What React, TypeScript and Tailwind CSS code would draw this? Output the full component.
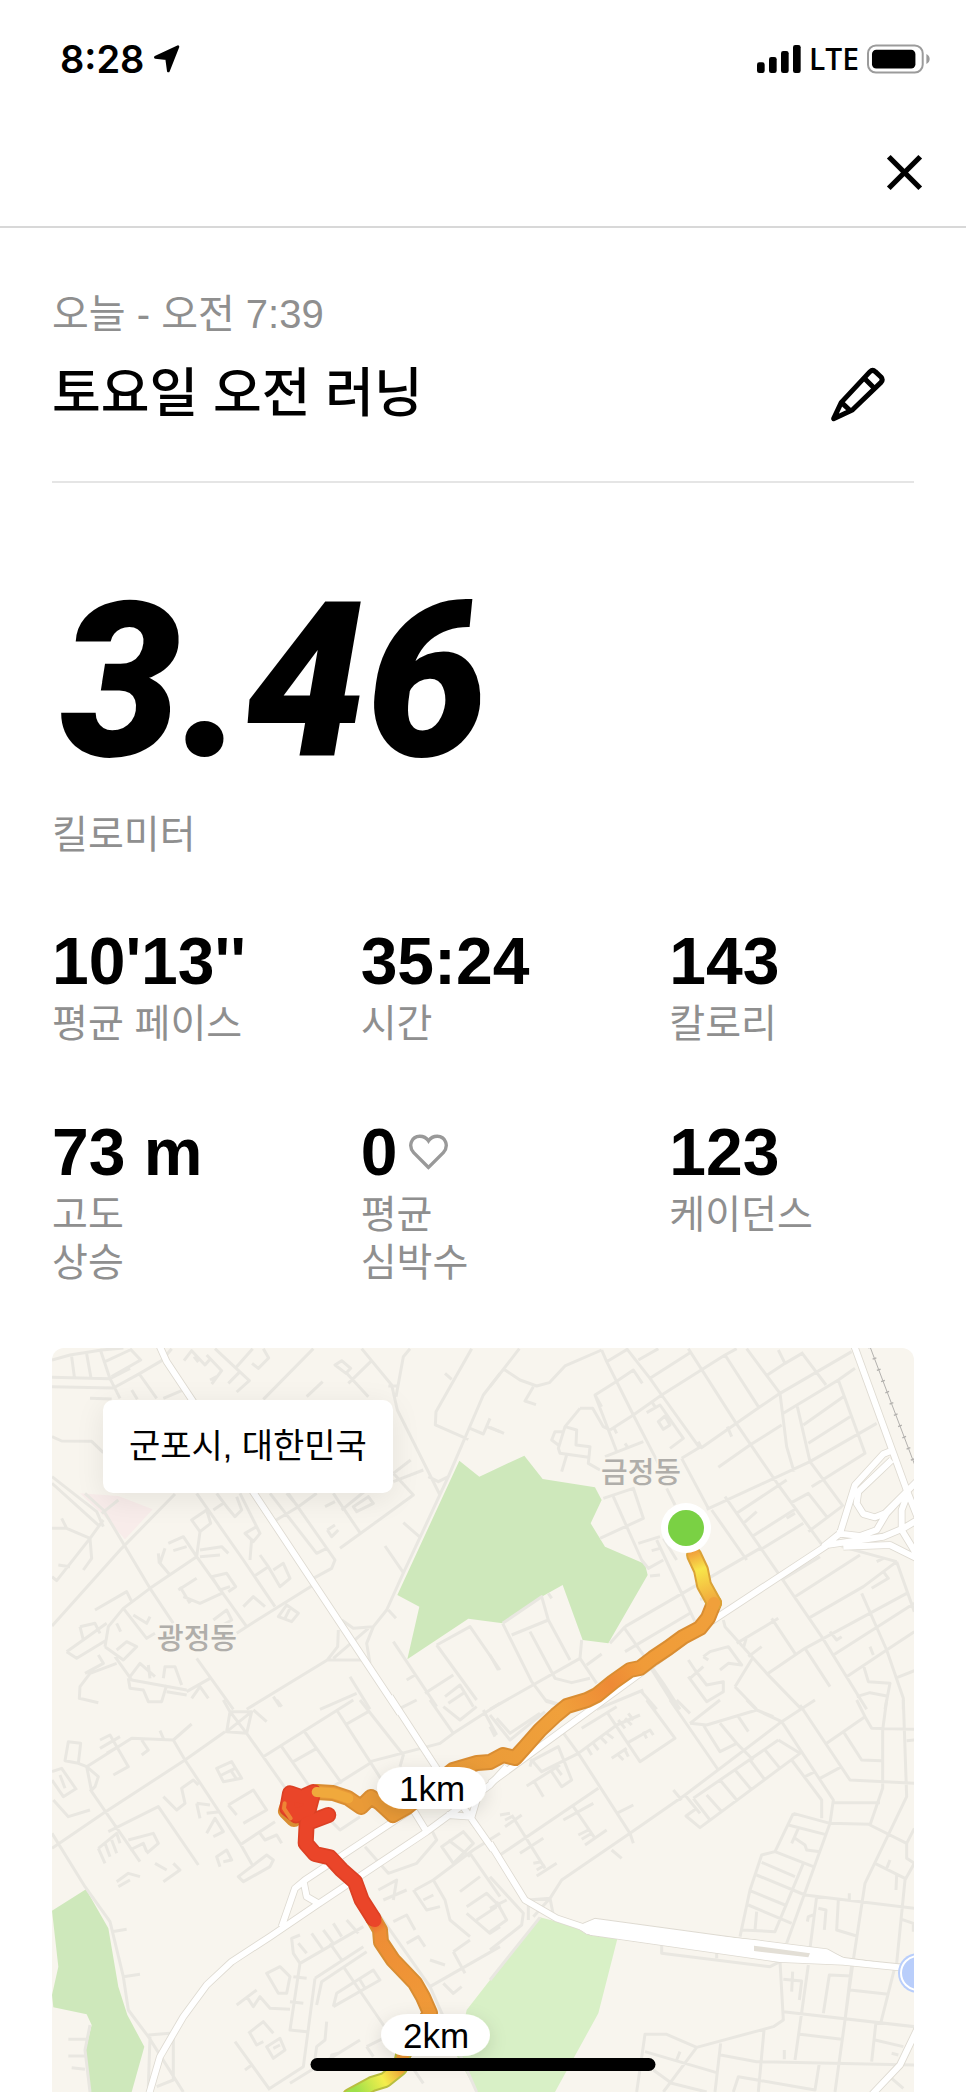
import { X } from 'lucide-react';

const textFont = "font-['Liberation_Sans','Noto_Sans_CJK_KR',sans-serif]";

const stats = [
  { value: "10'13''", label: '평균 페이스' },
  { value: '35:24', label: '시간' },
  { value: '143', label: '칼로리' },
  { value: '73 m', label: '고도\n상승' },
  { value: '0', label: '평균\n심박수', heart: true },
  { value: '123', label: '케이던스' },
];

// The map is drawn in four tiles, each at three units per pixel
const tiles = [
  {
    origin: 'translate(40 1330) scale(0.33333)',
    streets:
      'M36 90L90 75L185 60L250 54M36 142L210 146L270 115M36 170L220 174L300 130L365 92M95 80L103 140M140 72L153 144M180 56L210 146L240 205M195 95L270 60M270 56L302 90L215 140M298 132L350 205M275 180L292 208M365 92L395 56M150 205L215 207M370 205L425 182M36 320L65 333L155 334L190 368' +
      'M432 92L455 62L495 105L508 90M462 80L475 96M500 75L545 122L515 162M510 150L530 140M525 56L628 152L590 186M590 110L638 56M565 160L600 125M636 100L655 115L686 84L670 56M820 56L670 208M965 56L1055 165L1072 240L1200 495M995 92L925 160M885 105L905 92L932 115L918 130ZM920 130L985 200M800 200L848 155M1110 56L1090 80L1068 200M1045 168L1072 168' +
      'M1295 56L1188 245L1186 285L1285 328M1215 130L1235 148M1380 130L1330 195L1225 440L1195 455L1165 440M1290 295L1330 312L1350 265M1340 290L1380 305M1225 440L1085 740L1040 840L1000 890L940 895L905 870M1090 578L1138 620M1035 648L1090 728M1045 840L1068 865M1000 890L980 940L990 1000M895 900L893 950L862 990L985 990M862 990L620 1138M985 895L880 985' +
      'M36 440L170 545L190 590M36 460L180 590M135 490L190 540L330 775L400 880M235 510L185 550M190 570L150 625L155 685L130 720M36 595L80 595L150 625M65 565L80 595M150 625L50 752L36 740M55 705L90 710M36 888L245 655L405 492M330 775L470 680L480 605L455 570L500 540L512 580L480 605M390 735L360 700L375 655M358 700L355 670M385 640L430 620L470 680M400 662L440 650M480 660L545 650L565 670M480 680L540 675' +
      'M470 490L610 690L705 830M530 490L560 530L585 560L605 540L590 500M520 540L550 520M600 490L660 610L640 635L615 610L650 590M470 680L620 890L820 765M165 840L260 785L275 815M330 775L250 835L205 890L195 950M250 835L320 925L345 910M280 855L320 880L330 860M415 780L470 745M420 770L450 820M430 800L480 820L545 790M515 740L560 730L587 770L565 785M515 740L540 780L570 770M630 690L635 625M640 740L685 710L660 675M685 710L720 770L750 745L730 700L700 720M610 830L640 800L675 830M520 870L560 840L575 870L540 890M715 860L740 825L775 850L755 875ZM735 865L750 835M590 910L620 890' +
      'M705 572L775 530L830 490M690 490L830 670L860 655M745 490L885 690L875 715L820 745M775 530L740 490M880 490L960 608M900 655L1120 495L1060 430M905 540L1010 455M940 530L985 500L1000 520L950 545ZM855 530L885 515M1060 455L1150 420M1060 430L1112 390M862 600L885 585M862 600L875 620L895 600' +
      'M80 965L110 985L200 930M80 965L200 880M120 890L165 880L180 910M120 890L130 930M195 950L250 990L290 950L260 935L230 960M230 880L242 905M135 1030L190 1000L175 975M230 1000L150 1030L120 1070L118 1105L175 1118M225 980L275 1050L440 1080M265 1045L270 1075L310 1080L325 1115L365 1115L380 1065M270 1040L300 1000L345 1040M330 1045L325 1005M370 1045L375 1010L405 1010L425 1065M440 1095L380 1085M440 1085L510 1045M470 985L580 1138M455 1105L480 1070L505 1105M700 1100L720 1130M930 1040L990 1138M950 1090L840 1138M1060 935L1190 1130M1190 945L1290 890L1380 1020M1190 945L1310 1110M1100 1050L1125 1035M1240 1035L1155 1090M1215 1100L1260 1065L1300 1130M1225 1120L1270 1090',
    roads: 'M355 40L380 95L1080 1150',
  },
  {
    origin: 'translate(490 1330) scale(0.33333)',
    streets:
      'M0 170L88 56M42 118L90 150L140 168L178 158L225 108L335 60M130 170L105 213L138 224M0 292L42 310M335 60L350 95L430 255L505 400M350 95L415 56M378 155L430 120L457 160M378 155L315 195L382 370M315 195L335 230M360 300L430 255L515 195L705 75L740 56M410 56L480 145L515 195L630 355M445 90L505 56M480 145L600 68M595 56L735 275L865 465L1000 650M705 75L805 230M770 56L870 190L890 350L912 425M865 60L885 100L940 68M935 68L1008 165M885 100L832 135M632 355L808 232L870 190L1085 65M575 385L632 350M685 412L780 345L875 285M880 250L1045 150L1095 115M1045 150L1125 370L965 470' +
      'M922 230L960 395L1060 530M940 285L1060 200M955 340L1080 260M960 395L1160 280M960 395L650 538M740 550L890 450M760 580L800 545M785 620L920 535M810 660L940 580M900 520L955 490L1010 560M955 605L1055 530M575 385L655 535M665 540L770 690M705 500L865 730L995 920L1130 1138M890 565L915 550' +
      'M270 235L225 290L260 300L258 345L300 350L295 400L330 420M270 235L308 235L340 290L360 300M225 290L205 355L210 370L295 382M230 375L215 425M220 305L195 305L185 330L205 345M345 380L460 335M405 340L415 355M370 290L380 310M470 248L510 225L580 325L540 355M505 275L525 258L540 285L520 298ZM485 215L495 230M625 335L635 355M712 290L725 320' +
      'M340 505L430 475L460 565L330 625M370 500L455 690L475 715L520 690M445 640L510 620M485 662L510 655M480 738L510 735M500 630L615 875M530 475L555 525M520 625L560 690M405 890L810 655M405 965L600 850M360 940L405 890M400 890L520 1060L570 1138M290 1005L335 972M480 1010L560 1138M38 880L125 1055L170 1115L225 1130M65 915L175 870L240 990M38 880L155 800L175 870M0 1138L270 985L275 930M120 905L195 1045L245 1058L300 1045M175 790L185 805M0 975L25 1020M270 985L320 1060' +
      'M700 870L705 890L830 1030L935 1138M845 865L915 970M740 940L865 865M775 980L815 950M835 1030L945 955L1250 790M945 955L1020 1070M955 865L1120 770L1220 695M1030 975L1273 820M630 808L645 805M1070 1040L1190 960L1273 905M1115 790L1190 960L1240 1105L1240 1138M1220 695L1273 845M1055 650L1220 695M875 750L990 680M915 800L1110 675M1145 775L1195 745L1180 725M1160 695L1180 685M1120 1005L1135 1055L1200 1060L1185 1138M1215 1045L1273 1022M1100 1100L1140 1088L1190 1098M1140 950L1150 975M1020 905L1040 930L1055 920' +
      'M640 980L660 965L715 950L755 1005L715 1000L690 1020M640 980L655 990M595 990L615 1020L650 1065L700 1055L700 1085L650 1115L595 1040M600 1045L640 1010M735 1070L790 980M760 955L770 920M735 1070L800 1138M460 1080L320 1138M450 1080L500 1138',
    roads:
      'M1090 40L1210 370L1250 480L1290 580M1210 360L1180 372L1095 465L1050 610L1000 650M1205 390L1105 485L1100 520L1120 552L1155 562L1185 550L1290 445M1040 610L1110 618L1160 600L1190 550L1250 485M1010 645L1180 620L1240 595L1290 565M1060 650L1200 645L1290 690M1250 500L1235 540L1235 600L1290 690M1020 640L670 870L669 870',
  },
  {
    origin: 'translate(40 1700) scale(0.33333)',
    streets:
      'M36 400L135 560L210 665L250 830L265 930L325 1010L430 1176M36 445L190 340L435 180L555 95M400 120L435 180L600 430L640 500M455 72L400 120L275 115L140 200L155 275L300 485M360 92L372 120M305 120L325 150L305 165M85 125L122 130L115 190L75 182ZM115 190L140 200M140 200L175 230L165 260L150 275M36 215L65 205L110 270M36 240L70 290L110 265M60 225L75 265M40 300L85 350L150 330M180 120L210 105L265 200L220 225M180 145L240 110M200 160L235 140' +
      'M370 290L410 330L435 310L425 265L460 240L475 255M205 395L355 320L475 495M530 205L575 185L605 235L550 245ZM545 225L585 205M575 215L590 238M565 315L640 270L680 330L610 370M565 315L590 345M470 310L510 315M470 310L480 355M500 340L540 335M500 400L525 355L550 395L520 410M540 500L530 470L560 450L575 480L550 485M600 435L705 365M660 400L675 420L710 405L725 430M595 530L680 465L700 480L690 500L610 545Z' +
      'M175 445L230 400L240 430M175 445L195 490M195 430L210 470M215 420L230 460M265 420L340 400L355 430L320 460M270 450L310 430L320 455M230 545L265 520L300 530M235 560L270 540M370 545L420 510L400 490M345 490L380 510M570 35L635 35L620 100L560 95ZM570 35L620 100M635 35L560 95M550 0L570 35M620 100L740 270M670 170L940 0M725 140L830 290M790 90L905 250M760 185L830 145M830 290L990 190M890 30L990 185L1025 240M915 75L985 35M960 0L1090 165L1080 200M990 185L1200 130L1240 100L1380 10M1080 25L1130 0M1170 0L1240 100M1210 20L1260 60L1310 20M1330 30L1370 105M640 30L680 65M710 0L725 20' +
      'M860 350L900 390L960 350M975 440L1045 520L1130 490L1190 420L1175 390M1015 640L1170 860L1310 1176M1120 570L1160 630L1200 620M1150 600L1180 585M1180 540L1215 600L1230 660L1290 710M1180 540L1300 450L1380 400M1015 570L1070 540L1060 600M1030 600L1100 570M1125 570L1180 540M1205 440L1270 395L1300 430L1240 490ZM1225 420L1290 470M1290 460L1380 590M1260 575L1320 530M1280 620L1340 580L1380 620M1280 640L1350 700L1380 680M1310 660L1370 620M1060 665L1100 645L1125 690M1100 730L1135 710L1155 740M1170 780L1215 795M1170 860L1380 740M1210 850L1240 880L1265 860M1240 755L1290 720M1240 755L1275 820' +
      'M780 705L755 715L760 760L780 790L970 680M775 730L800 760M815 700L850 750M850 690L880 730M880 670L905 710M920 660L955 700M870 730L905 780M780 790L750 990L800 995M750 905L790 910M760 830L800 835M680 820L720 800L750 830L740 880L715 880ZM590 915L650 870M620 890L640 920L660 890L690 925L750 928M830 915L845 845L980 755M910 800L1020 960L1150 1150M825 835L970 740M825 835L790 1100L690 1165M880 920L890 880L1000 810L1020 840L880 920M960 840L975 865' +
      'M625 1000L670 965L700 1000M630 1000L650 1035L670 1025M680 1040L720 1015L735 1050L700 1075ZM700 1045L720 1035M585 1025L690 1170M615 1110L635 1095M860 965L855 1020L830 1040L820 1110M870 1100L875 1065L895 1060M750 1150L960 1020M980 1040L1040 1010M980 1040L1000 1070M325 1005L390 1000M330 1010L325 1160M400 1010L400 1140L350 1160M85 1018L140 1018M85 1068L140 1068M95 1103L135 1108M150 975L135 1050L150 1176M215 695L260 688M250 830L300 823',
    roads:
      'M325 1190L360 1070L430 950L500 855L575 785L690 710L830 615L1160 395L1350 255L1400 200M725 680L765 565L795 540L1120 325M790 540L800 590L835 610M1050 -10L1190 205L1290 350L1360 450M1120 330L1160 395M1220 345L1295 350L1310 300',
  },
  {
    origin: 'translate(490 1700) scale(0.33333)',
    streets:
      'M0 45L60 120L165 35M20 55L60 100L150 40M0 80L15 110M165 0L215 15M210 85L265 160L420 400L430 430M120 185L205 140L245 240L215 260L185 215M120 200L125 180L155 215L265 160M110 258L210 195M130 240L160 290M200 205L215 225M275 85L380 20M350 35L450 185L555 115L470 0M265 160L380 75L450 45M290 140L305 165M310 130L325 150M330 110L350 130M350 100L370 115M385 60L405 85M405 55L425 75M415 40L430 60M365 175L410 145M385 165L400 180M405 150L415 170M410 130L480 90L490 105M460 95L470 115' +
      'M30 465L325 265M65 345L165 505M30 345L60 340M45 360L65 350M45 380L95 345M90 460L160 415M130 490L155 485M140 510L165 495M140 528L200 490M220 360L310 310M250 320L315 415M265 405L295 390M275 418L305 400M285 435L350 390M380 340L430 315M180 595L215 540L420 400L585 285L875 65L975 0M550 270L575 300M365 450L395 475M115 600L180 595L190 645M180 595L130 650M115 600L115 660' +
      'M540 0L685 210M600 70L650 75L800 30L875 65M600 70L690 0M800 30L770 0M560 0L600 40M800 30L850 50M875 65L1030 300L1020 370L890 730M640 75L690 155L740 130L690 70M745 50L775 95M740 130L790 180M585 285L630 340M865 120L610 295M865 120L930 160L630 383L588 348L620 325M825 150L870 205M780 180L825 240M735 210L785 270M690 240L740 300M650 285L695 335M610 295L660 360M905 180L995 300L995 355M945 230L975 215M990 235L1055 200' +
      'M930 15L1080 240L1273 250M1010 130L1125 50L1100 0M1060 95L1115 180L1175 182M1125 50L1145 85L1273 88M1190 0L1178 90L1178 265L1140 375L1250 430L1273 385M1240 0L1250 290L1125 550L1090 780L1065 960L1035 1176M1250 122L1273 120M1030 308L1170 308M1020 370L1140 373M1250 430L1250 475L1273 490L1245 540L1220 790M1155 490L1245 535M1190 505L1200 480M1220 525L1218 570' +
      'M910 340L1020 370M910 340L855 455L815 465L780 570L750 710M895 375L1005 403M925 385L905 430M915 415L945 435L950 450L990 455M855 455L970 500M815 487L915 530M800 525L945 585L1273 625M780 572L885 615M775 615L905 670M940 490L855 695L755 690M800 635L795 690M980 590L960 745M985 625L1008 630L1003 690M970 645L955 650L952 665M1078 580L1078 600M1045 600L1040 690L1100 708M1235 658L1270 670L1270 695' +
      'M515 735L515 760L840 800L870 785M680 760L680 775M870 785L880 960L850 980L620 1042L530 1003L465 1003L440 1176M880 935L1273 980M955 795L915 1080M880 838L935 843L928 900M908 815L905 875M1085 828L1018 825L1000 940M1085 795L1065 960M1080 870L1195 883M1215 800L1172 970M930 1003L1055 1018M1158 965L1145 1085M1155 1020L1240 1040M465 1055L680 1118M570 1055L560 1080M620 1042L520 1176M692 1030L675 1176M692 1065L800 1085L1273 1095M822 990L805 1176M883 1050L883 1078M988 1090L975 1170L745 1130L730 1176M490 1110L545 1150L650 1176M1205 1060L1225 1065M1205 1135L1240 1165M0 530L100 640L95 675L0 750M0 625L50 600M20 605L50 660L0 695M150 652L0 840',
    roads:
      'M669 -240L0 250M0 430L105 600L200 655L290 685M1060 785L1240 803M1290 970L1230 1095L1140 1190M300 680L800 730L1010 757L1060 785L870 777L300 695',
  },
];

function LocationArrow() {
  return (
    <svg viewBox="0 0 76 82" className="w-[26px] h-7" aria-hidden="true">
      <path d="M4 36L70 5L42 76L37 40Z" stroke="black" strokeWidth="8" strokeLinejoin="round" />
    </svg>
  );
}

function SignalBars() {
  return (
    <svg viewBox="0 0 132 84" className="w-11 h-7" aria-hidden="true">
      <rect x="0" y="52" width="23" height="32" rx="7" />
      <rect x="36" y="36" width="23" height="48" rx="7" />
      <rect x="72" y="18" width="23" height="66" rx="7" />
      <rect x="108" y="0" width="23" height="84" rx="7" />
    </svg>
  );
}

function Battery() {
  return (
    <svg viewBox="0 0 190 90" className="w-[63px] h-[30px]" aria-hidden="true">
      <rect x="3" y="4" width="165" height="82" rx="24" fill="none" stroke="#9b9b9b" strokeWidth="6" />
      <rect x="15" y="17" width="131" height="57" rx="13" />
      <path d="M179 30Q189 35 189 45Q189 55 179 60Z" fill="#9b9b9b" />
    </svg>
  );
}

function PencilIcon() {
  return (
    <svg viewBox="94 78 166 168" className="w-14 h-14" fill="none" stroke="black" strokeWidth="15" strokeLinejoin="round" aria-hidden="true">
      <path d="M104 236L127 187L213 95Q221 87 229 95L246 111Q253 119 246 127L160 210Z" />
      <path d="M127 187L155 213M196 115L226 145" />
    </svg>
  );
}

function HeartIcon() {
  return (
    <svg viewBox="182 62 116 106" className="w-[39px] h-9" fill="none" stroke="#999" strokeWidth="10" aria-hidden="true">
      <path d="M240 161L196 117C178 96 190 68 214 68C228 68 236 76 240 82C244 76 252 68 266 68C290 68 302 96 284 117Z" />
    </svg>
  );
}

function RouteMap() {
  return (
    <svg viewBox="52 1348 862 744" className="block w-full" role="img" aria-label="러닝 경로">
      <defs>
        <linearGradient id="start" gradientUnits="userSpaceOnUse" x1="692" y1="1550" x2="714" y2="1606">
          <stop offset="0" stopColor="#f0983a" />
          <stop offset="0.35" stopColor="#f8e54a" />
          <stop offset="1" stopColor="#f0a03b" />
        </linearGradient>
        <linearGradient id="north" gradientUnits="userSpaceOnUse" x1="714" y1="1606" x2="453" y2="1770">
          <stop offset="0" stopColor="#f0a03b" />
          <stop offset="0.3" stopColor="#f09b38" />
          <stop offset="0.42" stopColor="#ee8a35" />
          <stop offset="0.6" stopColor="#f0a03b" />
          <stop offset="1" stopColor="#e99a37" />
        </linearGradient>
        <linearGradient id="south" gradientUnits="userSpaceOnUse" x1="370" y1="1912" x2="432" y2="2020">
          <stop offset="0" stopColor="#ea4529" />
          <stop offset="0.18" stopColor="#ee8d35" />
          <stop offset="1" stopColor="#f09b38" />
        </linearGradient>
        <linearGradient id="finish" gradientUnits="userSpaceOnUse" x1="404" y1="2068" x2="358" y2="2094">
          <stop offset="0" stopColor="#ee9a37" />
          <stop offset="0.45" stopColor="#f4ee4c" />
          <stop offset="1" stopColor="#9fe04a" />
        </linearGradient>
        <filter id="soft" x="-30%" y="-60%" width="160%" height="260%">
          <feDropShadow dx="0" dy="5" stdDeviation="9" floodColor="#000" floodOpacity="0.12" />
        </filter>
      </defs>

      <rect x="52" y="1348" width="862" height="744" fill="#f8f5ee" />

      <g transform="translate(40 1330) scale(0.33333)">
        <path fill="#f8ecea" d="M120 490L235 498L338 538L255 628L190 555Z" />
        <path
          fill="#cee8bb"
          d="M1258 392L1318 440L1350 425L1453 377L1508 447L1665 472L1685 510L1652 580L1695 650L1815 702L1823 735L1705 940L1628 930L1568 765L1505 800L1388 880L1285 866L1102 988L1138 830L1072 795Z"
        />
      </g>
      <path
        fill="#cee8bb"
        transform="translate(40 1700) scale(0.33333)"
        d="M36 632L138 568L205 685L235 860L262 945L313 1040L275 1176L152 1176L137 1050L155 975L140 943L40 922L36 885L55 800Z"
      />
      <path
        fill="#d8f0c6"
        transform="translate(490 1700) scale(0.33333)"
        d="M150 652L260 680L385 705L325 940L195 1176L-40 1176L-100 1067L-70 930L0 840Z"
      />

      {tiles.map((tile) => (
        <path key={tile.origin} d={tile.streets} transform={tile.origin} fill="none" stroke="#e9e7e1" strokeWidth="9" strokeLinejoin="round" />
      ))}
      <g transform="translate(490 1330) scale(0.33333)" fill="none" stroke="#b3b1ae">
        <path d="M1140 50L1280 420" strokeWidth="3" />
        <path d="M1140 50L1280 420" strokeWidth="12" strokeDasharray="4 32" />
      </g>
      {tiles.map((tile) => (
        <path key={tile.origin} d={tile.roads} transform={tile.origin} fill="none" stroke="#dedad1" strokeWidth="23" strokeLinejoin="round" />
      ))}
      <path
        fill="white"
        stroke="#dedad1"
        strokeWidth="3"
        transform="translate(490 1700) scale(0.33333)"
        d="M255 680L315 655L1010 750L1060 772L1225 795L1225 808L1090 793L930 787L870 782L290 703Z"
      />
      {tiles.map((tile) => (
        <path key={tile.origin} d={tile.roads} transform={tile.origin} fill="none" stroke="white" strokeWidth="18" strokeLinejoin="round" />
      ))}
      <path fill="#e3dfd6" transform="translate(490 1700) scale(0.33333)" d="M792 737L960 760L955 772L792 753Z" />

      <circle cx="918" cy="1973" r="20" fill="#b9cefb" />
      <circle cx="918" cy="1973" r="17" fill="#b9cefb" stroke="white" strokeWidth="2" />

      <g fill="none" strokeLinejoin="round" strokeLinecap="round">
        <g stroke="#d98d32" strokeWidth="16">
          <path d="M714 1603L708 1618L700 1628L683 1637L668 1648L653 1658L640 1668L630 1670L613 1682L597 1695L587 1700L567 1706L556 1715L540 1730L525 1747L515 1758L503 1755L490 1762L477 1763L453 1770L407 1807L393 1815L380 1803L371 1797L361 1807L348 1798L333 1793L317 1792" />
          <path d="M694 1555L701 1570L704 1585L714 1603" stroke="#dba236" />
          <path d="M373 1918L380 1930L381 1942L393 1960L415 1983L423 1997L430 2013L403 2055" />
          <path d="M403 2055L400 2068L385 2080L372 2084L350 2096" stroke="#b9bf3f" />
          <path d="M288 1805L286 1811L294 1819" />
        </g>
        <g strokeWidth="12">
          <path d="M694 1555L701 1570L704 1585L714 1603" stroke="url(#start)" />
          <path
            stroke="url(#north)"
            d="M714 1603L708 1618L700 1628L683 1637L668 1648L653 1658L640 1668L630 1670L613 1682L597 1695L587 1700L567 1706L556 1715L540 1730L525 1747L515 1758L503 1755L490 1762L477 1763L453 1770L407 1807L393 1815L380 1803L371 1797L361 1807L348 1798L333 1793L317 1792"
          />
          <path d="M373 1918L380 1930L381 1942L393 1960L415 1983L423 1997L430 2013L403 2055" stroke="url(#south)" />
          <path d="M403 2055L400 2068L385 2080L372 2084L350 2096" stroke="url(#finish)" />
        </g>
        <g transform="translate(40 1700) scale(0.33333)">
          <path stroke="#dc4024" strokeWidth="48" d="M865 345L800 370L797 430L825 462L870 472L905 510L945 545L965 600L1000 655M750 280L785 292L820 276L806 330L768 346L742 325Z" />
          <path stroke="#ea4529" strokeWidth="38" fill="#ea4529" d="M750 280L785 292L820 276L806 330L768 346L742 325Z" />
          <path stroke="#ea4529" strokeWidth="38" d="M865 345L800 370L797 430L825 462L870 472L905 510L945 545L965 600L1005 662" />
          <path stroke="#ee8535" strokeWidth="12" d="M734 310L732 325L752 355" />
          <path stroke="#f0a93c" strokeWidth="30" d="M830 276L880 280L925 295" />
        </g>
      </g>

      <circle cx="686" cy="1528" r="25" fill="white" />
      <circle cx="686" cy="1528" r="18" fill="#7ad144" />

      <g className="font-['Noto_Sans_CJK_KR',sans-serif] font-medium text-[29px]" textAnchor="middle" fill="#b0aeaa" stroke="#f8f5ee" strokeWidth="4" paintOrder="stroke">
        <text x="197" y="1649">광정동</text>
        <text x="641" y="1483">금정동</text>
      </g>

      <g fill="white" filter="url(#soft)">
        <rect x="377" y="1767" width="109" height="42" rx="27" />
        <rect x="381" y="2014" width="109" height="42" rx="27" />
      </g>
      <g className="font-['Liberation_Sans',sans-serif] text-[35px]" textAnchor="middle">
        <text x="432" y="1801">1km</text>
        <text x="436" y="2048">2km</text>
      </g>
    </svg>
  );
}

function App() {
  return (
    <div className={`min-h-screen bg-white text-black ${textFont}`}>
      <div className="flex h-[118px] items-center justify-between pl-[60px] pr-9">
        <div className="flex items-center gap-2.5">
          <span className="font-['Inter',sans-serif] text-[38px] font-semibold leading-none">8:28</span>
          <LocationArrow />
        </div>
        <div className="flex items-center gap-2">
          <SignalBars />
          <span className="font-['Open_Sans',sans-serif] text-[30px] font-semibold leading-none">LTE</span>
          <Battery />
        </div>
      </div>

      <header className="flex h-[110px] items-center justify-end border-b-2 border-[#d8d8d8] px-[30px]">
        <button type="button" aria-label="닫기">
          <X size={63} strokeWidth={2} strokeLinecap="butt" />
        </button>
      </header>

      <main className="px-[52px] pt-[62px]">
        <p className="text-[40px] leading-[48px] text-[#8f8f8f]">오늘 - 오전 7:39</p>
        <div className="mt-6 flex items-center justify-between border-b-2 border-[#e5e5e5] pb-[55px] pr-7">
          <h1 className="text-[53px] font-medium leading-[64px]">토요일 오전 러닝</h1>
          <button type="button" aria-label="이름 편집">
            <PencilIcon />
          </button>
        </div>

        <p className="mt-[92px] pl-2 font-['Roboto',sans-serif] text-[216px] font-black italic leading-[216px]">3.46</p>
        <p className="mt-5 text-[39px] leading-[48px] text-[#8f8f8f]">킬로미터</p>

        <dl className="mt-[70px] grid grid-cols-3 gap-x-16 gap-y-[72px]">
          {stats.map((stat) => (
            <div key={stat.label} className="flex flex-col-reverse justify-end gap-[7px]">
              <dt className="whitespace-pre-line text-[39px] leading-[48px] text-[#8f8f8f]">{stat.label}</dt>
              <dd className="flex items-center gap-3 whitespace-nowrap text-[66px] font-bold leading-[64px]">
                {stat.value}
                {stat.heart && <HeartIcon />}
              </dd>
            </div>
          ))}
        </dl>

        <section className="relative mt-[61px] overflow-hidden rounded-t-xl">
          <RouteMap />
          <p className="absolute left-[51px] top-[52px] rounded-[10px] bg-white px-[26px] py-[22px] text-[34px] leading-[49px] shadow-[0_6px_30px_rgba(0,0,0,0.08)]">
            군포시, 대한민국
          </p>
        </section>
      </main>

      <div className="fixed bottom-[21px] left-1/2 h-[13px] w-[345px] -translate-x-1/2 rounded-full bg-black" />
    </div>
  );
}

export default App;
